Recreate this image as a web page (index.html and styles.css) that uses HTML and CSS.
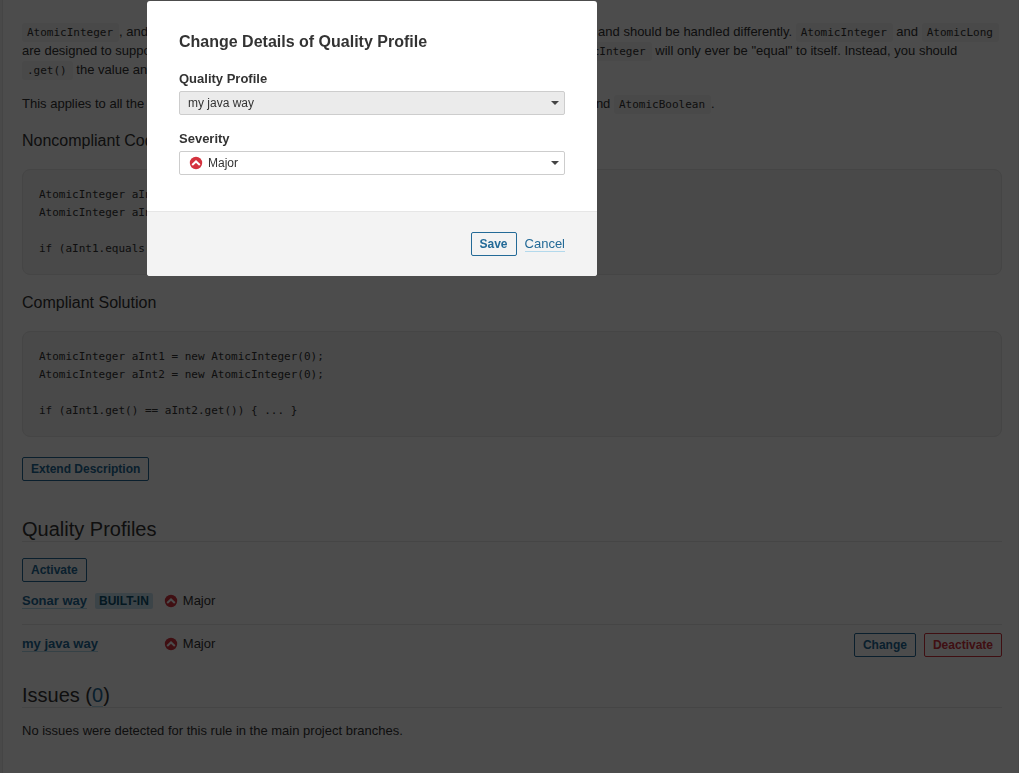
FILE: index.html
```html
<!DOCTYPE html>
<html lang="en">
<head>
<meta charset="utf-8">
<title>Coding Rules</title>
<link rel="stylesheet" href="styles.css">
</head>
<body>
<svg class="sprite" aria-hidden="true">
  <symbol id="major" viewBox="0 0 16 16">
    <circle cx="8" cy="8" r="6.2" fill="#d4333f"/>
    <path d="M4.2 9.9 8 6.4l3.8 3.5" fill="none" stroke="#fff" stroke-width="2"/>
  </symbol>
</svg>
<main class="page">
  <p><code>AtomicInteger</code>, and <code>AtomicLong</code> extend <code>Number</code>, but they're distinct from <code>Integer</code> and <code>Long</code> and should be handled differently. <code>AtomicInteger</code> and <code>AtomicLong</code> are designed to support lock-free, thread-safe programming on single variables. As such, an <code>AtomicInteger</code> will only ever be "equal" to itself. Instead, you should <code>.get()</code> the value and make comparisons on it.</p>
  <p>This applies to all the atomic, seeming-primitive wrapper classes: <code>AtomicInteger</code>, <code>AtomicLong</code>, and <code>AtomicBoolean</code>.</p>
  <h2>Noncompliant Code Example</h2>
  <pre>AtomicInteger aInt1 = new AtomicInteger(0);
AtomicInteger aInt2 = new AtomicInteger(0);

if (aInt1.equals(aInt2)) { ... }</pre>
  <h2>Compliant Solution</h2>
  <pre>AtomicInteger aInt1 = new AtomicInteger(0);
AtomicInteger aInt2 = new AtomicInteger(0);

if (aInt1.get() == aInt2.get()) { ... }</pre>
  <button class="button" type="button">Extend Description</button>

  <section class="section profiles">
    <h3>Quality Profiles</h3>
    <button class="button activate" type="button">Activate</button>
    <table class="table">
      <tr>
        <td class="name"><a class="link strong" href="#">Sonar way</a><span class="badge">BUILT-IN</span></td>
        <td><span class="severity"><svg class="icon" aria-hidden="true"><use href="#major"/></svg>Major</span></td>
        <td class="actions"></td>
      </tr>
      <tr>
        <td class="name"><a class="link strong" href="#">my java way</a></td>
        <td><span class="severity"><svg class="icon" aria-hidden="true"><use href="#major"/></svg>Major</span></td>
        <td class="actions"><div class="buttons"><button class="button" type="button">Change</button><button class="button danger" type="button">Deactivate</button></div></td>
      </tr>
    </table>
  </section>

  <section class="section issues">
    <h3>Issues (<a class="link" href="#">0</a>)</h3>
    <p>No issues were detected for this rule in the main project branches.</p>
  </section>
</main>

<div class="overlay">
  <form class="modal" role="dialog" aria-labelledby="modal-title">
    <div class="modal-body">
      <h1 id="modal-title">Change Details of Quality Profile</h1>
      <div class="field">
        <label for="profile">Quality Profile</label>
        <select id="profile" class="select" disabled><option>my java way</option></select>
      </div>
      <div class="field">
        <label for="severity">Severity</label>
        <div class="select-wrap">
          <select id="severity" class="select with-icon"><option>Major</option></select>
          <svg class="icon select-icon" aria-hidden="true"><use href="#major"/></svg>
        </div>
      </div>
    </div>
    <footer class="modal-footer">
      <button class="button" type="button">Save</button>
      <a class="link" href="#">Cancel</a>
    </footer>
  </form>
</div>
</body>
</html>
```

FILE: styles.css
```css
* { box-sizing: border-box; }
body {
  margin: 0;
  background: #f3f3f3;
  color: #333;
  font: 13px/19px "Liberation Sans", Arial, sans-serif;
}
.sprite { display: none; }
.page {
  min-height: 100vh;
  margin: 0 1px 0 2px;
  padding: 22px 16px 16px 19px;
  border-left: 1px solid #e6e6e6;
  background: #fff;
}
p { margin: 0 0 15px; }
code, pre { font-family: "DejaVu Sans Mono", Consolas, monospace; font-size: 11px; }
code { padding: 3px 6px 3px 5px; border-radius: 3px; background: #f3f3f3; line-height: 12px; }
h2 { margin: 16px 0; font-size: 16px; line-height: 24px; font-weight: 400; }
pre {
  margin: 0;
  padding: 16px;
  border: 1px solid #e6e6e6;
  border-radius: 8px;
  background: #f3f3f3;
  line-height: 18px;
}
.button {
  height: 24px;
  padding: 0 8px;
  border: 1px solid #236a97;
  border-radius: 2px;
  background: transparent;
  color: #236a97;
  font: bold 12px/20px "Liberation Sans", Arial, sans-serif;
}
.button.danger { border-color: #d4333f; color: #d4333f; }
pre + .button { display: block; margin-top: 20px; }
.profiles { margin-top: 36px; }
.issues { margin-top: 14px; }
h3 {
  margin: 0 0 13px;
  border-bottom: 1px solid #e6e6e6;
  font-size: 20px;
  line-height: 24px;
  font-weight: 400;
}
.activate { display: block; margin-top: 16px; }
.link { border-bottom: 1px solid #b3d9ec; color: #236a97; text-decoration: none; }
.strong { font-weight: bold; }
.table { width: 100%; border-collapse: collapse; }
.table td { padding: 8px 0 12px; vertical-align: top; line-height: 22px; }
.table tr + tr td { border-top: 1px solid #e6e6e6; }
.table .name { width: 1px; padding-right: 10px; white-space: nowrap; }
.badge {
  margin-left: 8px;
  padding: 1px 4px;
  border-radius: 2px;
  background: #cae3f2;
  color: #0e516f;
  font-size: 12px;
  font-weight: bold;
}
.severity { display: flex; align-items: center; gap: 4px; }
.icon { width: 16px; height: 16px; flex: none; }
.buttons { display: flex; justify-content: flex-end; gap: 8px; }

.overlay {
  position: fixed;
  inset: 0;
  padding: 1px 0 0 147px;
  background: rgba(0, 0, 0, 0.7);
}
.modal {
  width: 450px;
  max-width: 100%;
  border-radius: 3px;
  background: #fff;
  overflow: hidden;
}
.modal-body { padding: 31px 32px 36px; }
h1 { margin: 0 0 17px; font-size: 16px; line-height: 20px; font-weight: bold; }
.field + .field { margin-top: 14px; }
label { display: block; margin-bottom: 2px; font-weight: bold; line-height: 20px; }
.select-wrap { position: relative; }
.select {
  appearance: none;
  display: block;
  width: 100%;
  height: 24px;
  padding: 0 24px 0 8px;
  border: 1px solid #cdcdcd;
  border-radius: 2px;
  background: #fff url("data:image/svg+xml,%3Csvg xmlns='http://www.w3.org/2000/svg' viewBox='0 0 8 4'%3E%3Cpath d='M0 0h8L4 4z' fill='%23444'/%3E%3C/svg%3E") no-repeat right 5px center / 8px 4px;
  color: #333;
  font: 12px/20px "Liberation Sans", Arial, sans-serif;
}
.select:disabled { background-color: #ebebeb; color: #333; opacity: 1; }
.select.with-icon { padding-left: 28px; }
.select-icon { position: absolute; top: 4px; left: 9px; }
.modal-footer {
  display: flex;
  justify-content: flex-end;
  align-items: center;
  gap: 8px;
  padding: 20px 32px;
  border-top: 1px solid #e6e6e6;
  background: #f3f3f3;
}
.modal-footer .link { line-height: 15px; }
```
